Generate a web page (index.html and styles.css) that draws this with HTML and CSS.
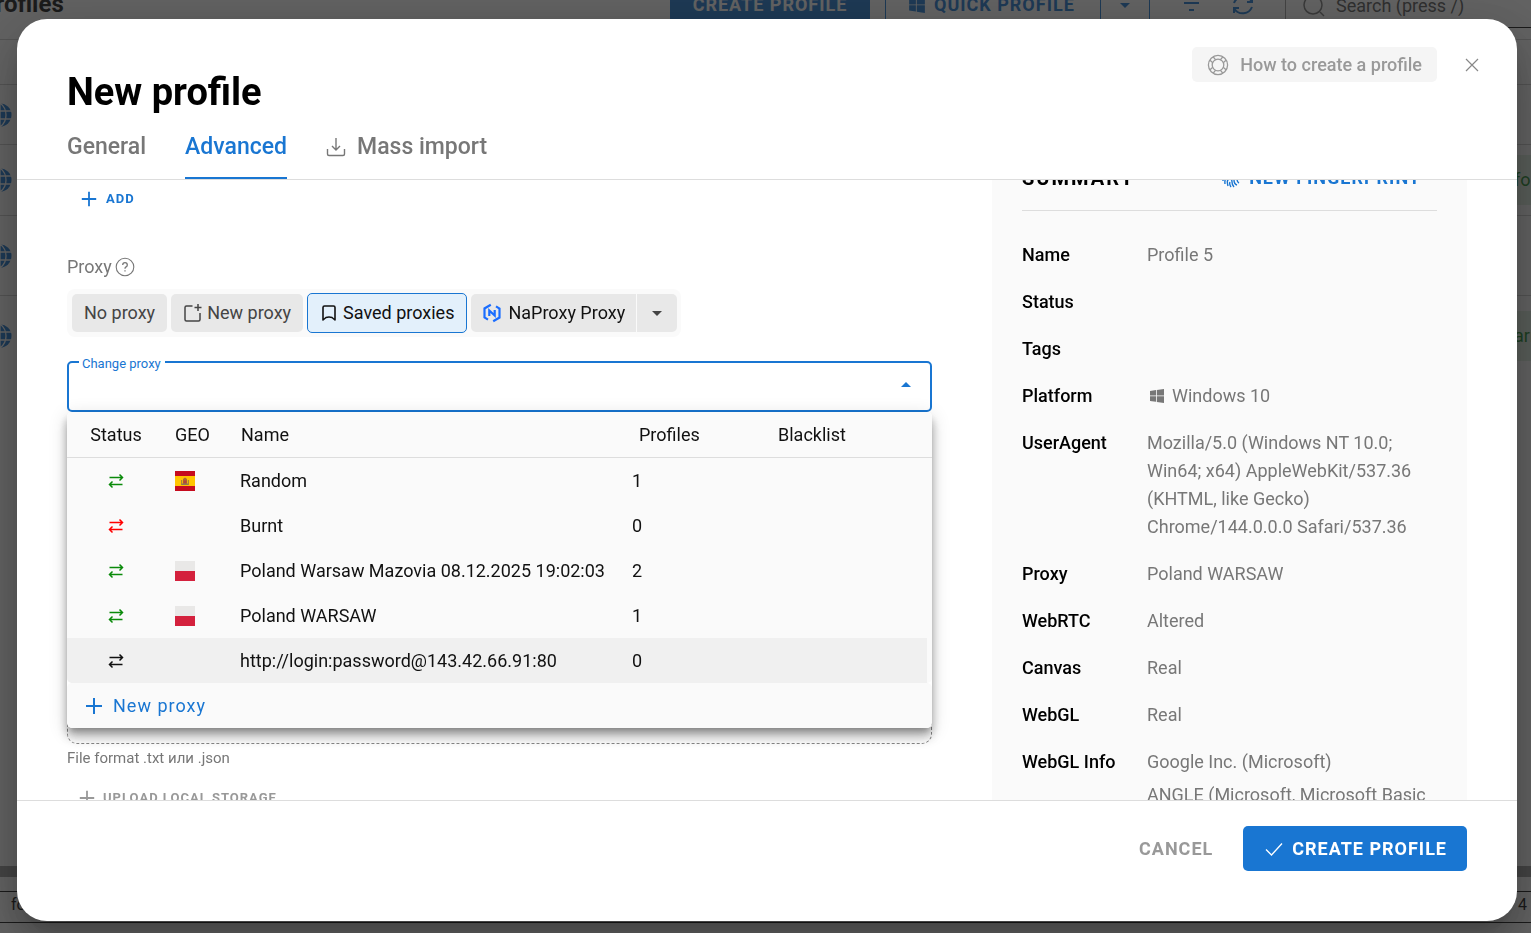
FILE: index.html
```html
<!DOCTYPE html>
<html lang="en">
<head>
<meta charset="utf-8">
<title>New profile</title>
<meta name="viewport" content="width=device-width, initial-scale=1">
<link rel="stylesheet" href="styles.css">
</head>
<body>
<svg class="sprite" aria-hidden="true">
  <symbol id="i-plus" viewBox="0 0 20 20"><path d="M10 2v16M2 10h16" fill="none" stroke="currentColor" stroke-width="2"/></symbol>
  <symbol id="i-swap" viewBox="0 0 16 16"><path d="M1.500 4.500h13M11.500 1.500l3 3-3 3M14.500 11.500h-13M4.500 8.500l-3 3 3 3" fill="none" stroke="currentColor" stroke-width="1.500"/></symbol>
  <symbol id="i-windows" viewBox="0 0 16 16"><path d="M1 3l6-.9v5.400H1zM7.800 2L15 1v6.500H7.800zM1 8.300h6v5.500l-6-.9zM7.800 8.300H15V15l-7.200-1.100z" fill="currentColor"/></symbol>
  <symbol id="i-globe" viewBox="0 0 24 24"><circle cx="12" cy="12" r="11.500" fill="currentColor"/><path d="M0 8h24M0 16h24M12 0v24M12 0C4 6 4 18 12 24M12 0c8 6 8 18 0 24" fill="none" stroke="#fff" stroke-width="1.300"/></symbol>
  <symbol id="i-pl" viewBox="0 0 20 20"><path d="M0 0h20v10H0z" fill="#e9e8e7"/><path d="M0 10h20v10H0z" fill="#d4213d"/></symbol>
  <symbol id="i-es" viewBox="0 0 20 20"><path d="M0 0h20v20H0z" fill="#c60b1e"/><path d="M0 5h20v10H0z" fill="#ffc400"/><path d="M8 8l2-1.500L12 8v6H8z" fill="#ad6b35"/><path d="M6 9h1.200v5H6zM12.800 9H14v5h-1.200z" fill="#a5823c"/><path d="M8.500 9.500h3v3h-3z" fill="#b3433b"/><path d="M7 12.500h6V14H7z" fill="#8b7a52"/></symbol>
</svg>

<div class="page">
  <header class="page-head">
    <h2 class="page-title">Profiles</h2>
    <div class="page-tools">
      <button class="bar-create">CREATE PROFILE</button>
      <button class="bar-quick"><svg class="ic18"><use href="#i-windows"/></svg>QUICK PROFILE</button>
      <button class="bar-more" aria-label="More profiles"><span class="caret"></span></button>
      <button class="bar-filter" aria-label="Filter"><svg class="ic20" viewBox="0 0 20 20"><path d="M0 3h20M3 10h15M8 17h5" fill="none" stroke="currentColor" stroke-width="2"/></svg></button>
      <button class="bar-sync" aria-label="Refresh"><svg class="ic24" viewBox="0 0 24 24"><path d="M3 20v-5h5M3.500 16A10 10 0 0 0 21 14M21 4v5h-5M20.500 8A10 10 0 0 0 3 10" fill="none" stroke="currentColor" stroke-width="2"/></svg></button>
      <div class="bar-search">
        <svg class="ic24" viewBox="0 0 24 24"><circle cx="11" cy="11" r="9" fill="none" stroke="#777" stroke-width="1.500"/><path d="M18 18l4 4" stroke="#777" stroke-width="1.500"/></svg>
        <input class="search-input" aria-label="Search" placeholder="Search (press /)">
      </div>
    </div>
  </header>
  <div class="page-rows">
    <div class="prow prow-head"></div>
    <div class="prow prow-60"><svg class="globe"><use href="#i-globe"/></svg></div>
    <div class="prow prow-71"><svg class="globe"><use href="#i-globe"/></svg><span class="chip">for</span></div>
    <div class="prow prow-80"><svg class="globe"><use href="#i-globe"/></svg></div>
    <div class="prow prow-80 prow-last"><svg class="globe"><use href="#i-globe"/></svg><span class="chip">arr</span></div>
  </div>
  <div class="page-scroll"></div>
  <footer class="page-foot"><span>for</span><span>1-4 / 4</span></footer>
</div>

<div class="scrim">
<section class="modal" role="dialog" aria-labelledby="dlg-title">
  <header class="modal-head">
    <div class="head-row">
      <h1 class="title" id="dlg-title">New profile</h1>
      <div class="head-actions">
        <button class="howto"><svg class="ic22" viewBox="0 0 22 22"><g fill="none" stroke="currentColor" stroke-width="1.300"><circle cx="11" cy="11" r="9.600"/><circle cx="11" cy="11" r="5.800"/><path d="M16.200 13.300l2.800 2.400M13.300 16.200l2.400 2.800M5.800 13.300L3 15.700M8.700 16.200L6.300 19M16.200 8.700L19 6.300M13.300 5.800L15.700 3M5.800 8.700L3 6.300M8.700 5.800L6.300 3"/></g></svg>How to create a profile</button>
        <button class="close" aria-label="Close"><svg class="ic14" viewBox="0 0 14 14"><path d="M1 1l12 12M13 1L1 13" stroke="currentColor" stroke-width="1.200"/></svg></button>
      </div>
    </div>
    <nav class="tabs">
      <a class="tab" href="#general">General</a>
      <a class="tab tab-on" href="#advanced">Advanced</a>
      <a class="tab" href="#import"><svg class="ic20" viewBox="0 0 20 20"><path d="M10 1v12M6 9l4 4 4-4M1.500 12v5q0 1.500 1.500 1.500h14q1.500 0 1.500-1.500v-5" fill="none" stroke="currentColor" stroke-width="1.400"/></svg>Mass import</a>
    </nav>
  </header>

  <div class="modal-body">
    <div class="form">
      <button class="add"><svg class="ic18"><use href="#i-plus"/></svg>ADD</button>
      <div class="label-row">Proxy
        <svg class="ic20" viewBox="0 0 20 20"><circle cx="10" cy="10" r="8.800" fill="none" stroke="currentColor" stroke-width="1.100"/><path d="M7.700 8q0-2.300 2.300-2.300T12.300 8q0 1.200-1.200 1.900T10 11.800M10 13.300v1.300" fill="none" stroke="currentColor" stroke-width="1.300"/></svg>
      </div>
      <div class="seg">
        <button class="seg-btn">No proxy</button>
        <button class="seg-btn"><svg class="ic20" viewBox="0 0 20 20"><path d="M9.500 3H3.500Q2 3 2 4.500v12Q2 18 3.500 18h12q1.500 0 1.500-1.500V10M15 1v7M11.500 4.500h7" fill="none" stroke="currentColor" stroke-width="1.500"/></svg>New proxy</button>
        <button class="seg-btn seg-on"><svg class="ic18" viewBox="0 0 18 18"><path d="M3 16V3.500Q3 2 4.500 2h9Q15 2 15 3.500V16l-3-2.500q-3-1-6 0z" fill="none" stroke="currentColor" stroke-width="1.600" stroke-linejoin="round"/></svg>Saved proxies</button>
        <div class="seg-split">
          <button class="seg-btn seg-brand"><svg class="ic20" viewBox="0 0 20 20"><path d="M8.800 1.800L2.500 5.500v9L6 16.600M11.200 18.200l6.300-3.700v-9L14 3.400M7.300 13V7.500l5.400 5V7" fill="none" stroke="#1a6dff" stroke-width="2.200"/></svg>NaProxy Proxy</button>
          <button class="seg-btn seg-more" aria-label="More providers"><span class="caret"></span></button>
        </div>
      </div>

      <div class="combo">
        <label class="combo-label" for="proxy">Change proxy</label>
        <input class="combo-input" id="proxy" role="combobox" aria-expanded="true" aria-controls="proxy-menu">
        <span class="combo-arrow"></span>
        <div class="menu" id="proxy-menu">
          <div class="menu-list">
          <table class="proxies">
            <thead><tr><th class="c-status">Status</th><th class="c-geo">GEO</th><th class="c-name">Name</th><th class="c-prof">Profiles</th><th class="c-black">Blacklist</th></tr></thead>
            <tbody>
              <tr><td class="c-status ok"><svg class="ic16"><use href="#i-swap"/></svg></td><td><svg class="flag"><use href="#i-es"/></svg></td><td>Random</td><td>1</td><td></td></tr>
              <tr><td class="c-status bad"><svg class="ic16"><use href="#i-swap"/></svg></td><td></td><td>Burnt</td><td>0</td><td></td></tr>
              <tr><td class="c-status ok"><svg class="ic16"><use href="#i-swap"/></svg></td><td><svg class="flag"><use href="#i-pl"/></svg></td><td>Poland Warsaw Mazovia 08.12.2025 19:02:03</td><td>2</td><td></td></tr>
              <tr><td class="c-status ok"><svg class="ic16"><use href="#i-swap"/></svg></td><td><svg class="flag"><use href="#i-pl"/></svg></td><td>Poland WARSAW</td><td>1</td><td></td></tr>
              <tr class="hover"><td class="c-status"><svg class="ic16"><use href="#i-swap"/></svg></td><td></td><td>http://login:password@143.42.66.91:80</td><td>0</td><td></td></tr>
            </tbody>
          </table>
          </div>
          <button class="menu-new"><svg class="ic20"><use href="#i-plus"/></svg>New proxy</button>
        </div>
      </div>

      <div class="dropzone"></div>
      <p class="hint">File format .txt или .json</p>
      <button class="upload"><svg class="ic18"><use href="#i-plus"/></svg>UPLOAD LOCAL STORAGE</button>
    </div>

    <aside class="summary">
      <div class="sum-head">
        <h2 class="sum-title">SUMMARY</h2>
        <button class="sum-new"><svg class="ic20" viewBox="0 0 20 20"><path d="M1 9q1-7 9-7 8 0 9 8M2 13q0-8 8-8 6 0 6 6 0 3 2 4M4 16q-1-8 6-8 3 0 3 4 0 4 3 5M7 18q-2-7 2-7 2 0 2 3t2 5M10 19q-2-3-1-5" fill="none" stroke="currentColor" stroke-width="1.400"/></svg>NEW FINGERPRINT</button>
      </div>
      <dl class="sum-list">
        <dt>Name</dt><dd>Profile 5</dd>
        <dt>Status</dt><dd></dd>
        <dt>Tags</dt><dd></dd>
        <dt>Platform</dt><dd class="platform"><svg class="ic16"><use href="#i-windows"/></svg>Windows 10</dd>
        <dt>UserAgent</dt><dd>Mozilla/5.0 (Windows NT 10.0; Win64; x64) AppleWebKit/537.36 (KHTML, like Gecko) Chrome/144.0.0.0 Safari/537.36</dd>
        <dt>Proxy</dt><dd>Poland WARSAW</dd>
        <dt>WebRTC</dt><dd>Altered</dd>
        <dt>Canvas</dt><dd>Real</dd>
        <dt>WebGL</dt><dd>Real</dd>
        <dt>WebGL Info</dt><dd>Google Inc. (Microsoft)<span class="renderer">ANGLE (Microsoft, Microsoft Basic Render Driver)</span></dd>
      </dl>
    </aside>
  </div>

  <footer class="modal-foot">
    <button class="cancel">CANCEL</button>
    <button class="create"><svg class="ic18" viewBox="0 0 18 18"><path d="M1 9.500l5.500 5.500L17 3.500" fill="none" stroke="currentColor" stroke-width="1.300"/></svg>CREATE PROFILE</button>
  </footer>
</section>
</div>
</body>
</html>
```
FILE: styles.css
```css
* { box-sizing: border-box; }
body { margin: 0; height: 100vh; overflow: hidden; font-family: Roboto, "Liberation Sans", sans-serif; font-size: 18px; line-height: 28px; color: #111; background: #fff; }
button, input { font: inherit; letter-spacing: inherit; color: inherit; border: 0; background: none; padding: 0; margin: 0; }
button { display: inline-flex; align-items: center; white-space: nowrap; cursor: pointer; }
h1, h2, p, dl, dd { margin: 0; }
svg { display: block; flex: none; }
.sprite { position: absolute; width: 0; height: 0; }
.ic14 { width: 14px; height: 14px; }
.ic16 { width: 16px; height: 16px; }
.ic18 { width: 18px; height: 18px; }
.ic20 { width: 20px; height: 20px; }
.ic22 { width: 22px; height: 22px; }
.ic24 { width: 24px; height: 24px; }
.caret { border: 5px solid transparent; border-top-color: currentColor; border-bottom: 0; }

/* Page behind the dialog */
.page { height: 100vh; display: flex; flex-direction: column; overflow: hidden; }
.page-head { height: 40px; flex: none; display: flex; justify-content: space-between; border-bottom: 1px solid #ccc; }
.page-title { font-size: 24px; line-height: 28px; font-weight: 700; margin: -10px 0 0 -20px; }
.page-tools { display: flex; height: 28px; color: #1976d2; letter-spacing: 1px; font-weight: 700; }
.bar-create { width: 200px; height: 19px; justify-content: center; background: #1976d2; color: #fff; padding-bottom: 10px; }
.bar-quick { width: 215px; margin-left: 15px; border-left: 1px solid; gap: 8px; padding: 0 0 18px 22px; }
.bar-more { width: 50px; border: solid; border-width: 0 1px; justify-content: center; padding-bottom: 18px; }
.bar-filter { width: 48px; justify-content: flex-end; margin-left: 3px; padding-bottom: 22px; }
.bar-sync { width: 54px; justify-content: flex-end; padding-bottom: 18px; }
.bar-search { display: flex; align-items: center; width: 246px; margin-left: 30px; padding: 0 0 15px 16px; gap: 10px; border-left: 1px solid #999; border-bottom: 1px solid #111; color: #333; letter-spacing: normal; font-weight: 400; }
.search-input { width: 160px; }
.search-input::placeholder { color: #555; opacity: 1; }
.page-rows { flex: 1; overflow: hidden; }
.prow { display: flex; align-items: center; justify-content: space-between; border-bottom: 1px solid #ccc; }
.prow-head { height: 45px; }
.prow-60 { height: 60px; }
.prow-71 { height: 71px; }
.prow-80 { height: 80px; }
.prow-last { border-bottom: 0; }
.globe { width: 24px; height: 24px; margin-left: -12px; color: #1976d2; }
.chip { width: 60px; height: 50px; line-height: 50px; margin-right: -30px; padding-left: 13px; background: #dfeee0; color: #1b8a2a; }
.page-scroll { height: 11px; flex: none; background: #9a9a9a; }
.page-foot { height: 56px; flex: none; display: flex; justify-content: space-between; padding: 14px 4px 12px 11px; }
.page-foot::before { content: ""; position: absolute; left: 0; right: 0; height: 30px; border: solid #111; border-width: 1px 0; }
.page-foot span { font-size: 16px; }

/* Dialog */
.scrim { position: fixed; inset: 0; display: flex; padding: 19px 14px 12px 17px; background: rgba(33, 33, 33, .7); }
.modal { flex: 1; min-width: 0; display: flex; flex-direction: column; overflow: hidden; background: #fff; border-radius: 30px; box-shadow: 0 14px 19px -9px rgba(0,0,0,.2), 0 30px 48px 4px rgba(0,0,0,.14), 0 11px 58px 10px rgba(0,0,0,.12); }
.modal-head { flex: none; border-bottom: 1px solid #ddd; }
.head-row { display: flex; justify-content: space-between; align-items: flex-start; padding: 28px 37px 0 50px; }
.title { font-size: 38px; line-height: 44px; font-weight: 700; color: #000; margin-top: 23px; }
.head-actions { display: flex; align-items: center; gap: 27px; }
.howto { height: 35px; padding: 0 15px; gap: 11px; border-radius: 5px; background: #f5f5f5; color: #999; font-weight: 500; }
.close { padding: 1px; color: #888; }
.tabs { display: flex; gap: 39px; padding: 0 50px; height: 65px; }
.tab { display: flex; align-items: center; gap: 11px; padding-top: 2px; font-size: 23px; font-weight: 500; color: #777; text-decoration: none; border-bottom: 2px solid transparent; }
.tab-on { color: #1976d2; border-color: #1976d2; }

.modal-body { flex: 1; min-height: 0; overflow: hidden; display: grid; grid-template-columns: 865fr 475fr; gap: 60px; padding: 0 50px; }
.form { display: flex; flex-direction: column; align-items: flex-start; }
.add { height: 38px; padding: 0 13px; gap: 8px; font-size: 13px; font-weight: 700; letter-spacing: 1px; color: #1976d2; }
.label-row { display: flex; align-items: center; gap: 3px; margin-top: 35px; color: #777; }
.seg { display: flex; align-items: center; gap: 4px; height: 48px; margin-top: 8px; padding: 0 4px 0 5px; border-radius: 8px; background: #fafafa; }
.seg-btn { height: 38px; padding: 0 12px; gap: 4px; border-radius: 5px; background: #e8e8e8; color: #444; }
.seg-on { height: 40px; gap: 5px; border: 1px solid #1976d2; background: #e3f0fb; color: #111; }
.seg-split { display: flex; gap: 1px; }
.seg-brand { gap: 6px; padding: 0 11px; color: #111; border-radius: 5px 0 0 5px; }
.seg-more { width: 40px; justify-content: center; border-radius: 0 5px 5px 0; }

.combo { position: relative; width: 100%; margin-top: 24px; }
.combo-input { display: block; width: 100%; height: 51px; padding: 0 50px 0 14px; border: 2px solid #1976d2; border-radius: 5px; background: #fff; outline: 0; }
.combo-label { position: absolute; left: 12px; top: -5px; padding: 0 4px 0 3px; font-size: 13px; line-height: 16px; color: #1976d2; background: #fff; }
.combo-arrow { position: absolute; right: 21px; top: 21px; border: 5px solid transparent; border-bottom-color: #1976d2; border-top: 0; }
.menu { position: absolute; z-index: 2; top: 100%; left: 0; right: 0; border-radius: 5px; box-shadow: 0 6px 6px -4px rgba(0,0,0,.2), 0 10px 12px 1px rgba(0,0,0,.14), 0 4px 18px 2px rgba(0,0,0,.12), 0 6px 8px rgba(0,0,0,.2); }
.menu-list { overflow: hidden; border-radius: 5px; background: #fafafa; }
.proxies { width: 100%; table-layout: fixed; border-spacing: 0; }
.proxies th, .proxies td { height: 45px; padding: 0 9px; text-align: left; font-weight: 400; white-space: nowrap; }
.proxies th { height: 46px; border-bottom: 1px solid #ddd; }
.proxies td:last-child { border-right: 5px solid transparent; background-clip: padding-box; }
.proxies .c-status { width: 99px; padding-right: 10px; text-align: center; }
.proxies td.c-status svg { margin: 0 auto; }
.proxies .c-geo { width: 65px; }
.proxies .c-name { padding-left: 10px; }
.proxies .c-prof { width: 139px; padding-left: 16px; }
.proxies .c-black { width: 170px; padding-left: 16px; }
.ok { color: #0a8a0a; }
.bad { color: #f00; }
.flag { width: 20px; height: 20px; }
.hover td { background-color: #f0f0f0; }
.menu-new { width: 100%; height: 45px; padding: 0 17px; gap: 9px; border-radius: 5px; background: #fafafa; color: #1976d2; letter-spacing: 1px; }

.dropzone { width: 100%; height: 62px; margin-top: 270px; border: 1px dashed #888; border-radius: 10px; }
.hint { margin-top: 4px; font-size: 15px; line-height: 20px; color: #777; }
.upload { margin-top: 20px; padding: 0 11px; gap: 7px; font-size: 13px; line-height: 20px; font-weight: 700; letter-spacing: 1px; color: #999; }

.summary { min-width: 0; padding: 0 30px; background: #fafafa; }
.sum-head { display: flex; justify-content: space-between; align-items: center; height: 66px; margin-top: -35px; padding-right: 16px; border-bottom: 1px solid #ddd; }
.sum-title { font-size: 20px; font-weight: 700; letter-spacing: 2px; color: #000; }
.sum-new { gap: 8px; color: #1976d2; font-weight: 700; letter-spacing: 1px; }
.sum-list { display: grid; grid-template-columns: 125px 1fr; row-gap: 19px; margin-top: 30px; line-height: 28px; color: #777; }
.sum-list dt { font-weight: 500; color: #000; }
.platform { display: flex; align-items: center; gap: 7px; padding-left: 2px; }
.renderer { display: block; margin-top: 5px; }

.modal-foot { flex: none; display: flex; align-items: center; justify-content: flex-end; gap: 30px; padding: 25px 50px 50px; border-top: 1px solid #ddd; font-weight: 700; letter-spacing: 1px; }
.cancel { color: #999; }
.create { height: 45px; padding: 0 20px 0 22px; gap: 9px; border-radius: 5px; background: #1976d2; color: #fff; }
```
